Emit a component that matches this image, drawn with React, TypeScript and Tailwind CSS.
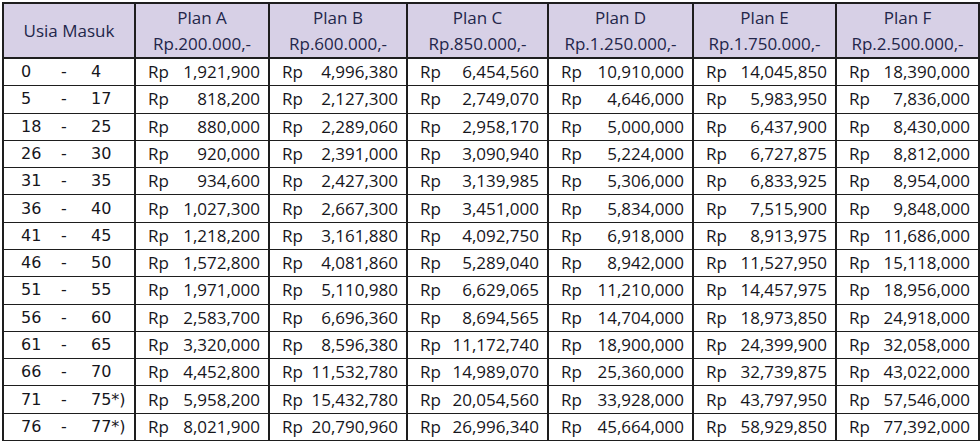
import React from 'react';

const plans = [
  { name: 'Plan A', price: 'Rp.200.000,-' },
  { name: 'Plan B', price: 'Rp.600.000,-' },
  { name: 'Plan C', price: 'Rp.850.000,-' },
  { name: 'Plan D', price: 'Rp.1.250.000,-' },
  { name: 'Plan E', price: 'Rp.1.750.000,-' },
  { name: 'Plan F', price: 'Rp.2.500.000,-' },
];

const rows: [string, string, string[]][] = [
  ['0', '4', ['1,921,900', '4,996,380', '6,454,560', '10,910,000', '14,045,850', '18,390,000']],
  ['5', '17', ['818,200', '2,127,300', '2,749,070', '4,646,000', '5,983,950', '7,836,000']],
  ['18', '25', ['880,000', '2,289,060', '2,958,170', '5,000,000', '6,437,900', '8,430,000']],
  ['26', '30', ['920,000', '2,391,000', '3,090,940', '5,224,000', '6,727,875', '8,812,000']],
  ['31', '35', ['934,600', '2,427,300', '3,139,985', '5,306,000', '6,833,925', '8,954,000']],
  ['36', '40', ['1,027,300', '2,667,300', '3,451,000', '5,834,000', '7,515,900', '9,848,000']],
  ['41', '45', ['1,218,200', '3,161,880', '4,092,750', '6,918,000', '8,913,975', '11,686,000']],
  ['46', '50', ['1,572,800', '4,081,860', '5,289,040', '8,942,000', '11,527,950', '15,118,000']],
  ['51', '55', ['1,971,000', '5,110,980', '6,629,065', '11,210,000', '14,457,975', '18,956,000']],
  ['56', '60', ['2,583,700', '6,696,360', '8,694,565', '14,704,000', '18,973,850', '24,918,000']],
  ['61', '65', ['3,320,000', '8,596,380', '11,172,740', '18,900,000', '24,399,900', '32,058,000']],
  ['66', '70', ['4,452,800', '11,532,780', '14,989,070', '25,360,000', '32,739,875', '43,022,000']],
  ['71', '75*)', ['5,958,200', '15,432,780', '20,054,560', '33,928,000', '43,797,950', '57,546,000']],
  ['76', '77*)', ['8,021,900', '20,790,960', '26,996,340', '45,664,000', '58,929,850', '77,392,000']],
];

const widths = ['w-[132px]', 'w-[134px]', 'w-[138px]', 'w-[141px]', 'w-[145px]', 'w-[143px]', 'w-[143px]'];

export default function App() {
  return (
    <div className="w-[980px] h-[441px] bg-white pt-[2px] pl-[2px] overflow-hidden">
      <table
        className="w-[977px] h-[439px] border-collapse table-fixed text-[#16161c]"
        style={{ fontFamily: '"Open Sans", "Noto Sans", sans-serif' }}
      >
        <colgroup>
          {widths.map((w, i) => (
            <col key={i} className={w} />
          ))}
        </colgroup>
        <thead>
          <tr className="h-[55px] bg-[#d7d0e6] text-[#23264a] text-[17px]">
            <th className="border-2 border-[#1e1e1e] font-normal text-center align-middle">
              Usia Masuk
            </th>
            {plans.map((p) => (
              <th key={p.name} className="border-2 border-[#1e1e1e] font-normal text-center align-middle leading-[26px]">
                <div>{p.name}</div>
                <div>{p.price}</div>
              </th>
            ))}
          </tr>
        </thead>
        <tbody>
          {rows.map(([from, to, vals]) => (
            <tr key={from} className="text-[17px]">
              <td className="border-x-2 border-y border-[#1e1e1e] p-0">
                <div
                  className="flex items-center pl-[17px] text-[16px]"
                  style={{ fontFamily: '"DejaVu Sans", Verdana, sans-serif' }}
                >
                  <span className="w-[40px]">{from}</span>
                  <span className="w-[30px]">-</span>
                  <span className="whitespace-nowrap">{to}</span>
                </div>
              </td>
              {vals.map((v, i) => (
                <td key={i} className="border-x-2 border-y border-[#1e1e1e] p-0">
                  <div className="flex items-center justify-between pl-[12px] pr-[8px] whitespace-nowrap leading-[24px]">
                    <span>Rp</span>
                    <span>{v}</span>
                  </div>
                </td>
              ))}
            </tr>
          ))}
        </tbody>
      </table>
    </div>
  );
}
